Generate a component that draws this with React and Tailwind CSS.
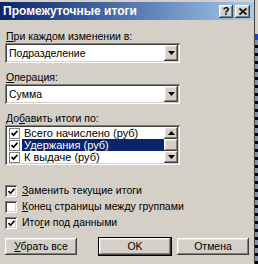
import React from "react";

const RAISED =
  "shadow-[inset_-1px_-1px_0_#404040,inset_1px_1px_0_#ffffff,inset_-2px_-2px_0_#808080,inset_2px_2px_0_#e4e2dc]";
const SUNKEN =
  "shadow-[inset_1px_1px_0_#808080,inset_-1px_-1px_0_#ffffff,inset_2px_2px_0_#404040,inset_-2px_-2px_0_#d4d0c8]";

function Check({ size = 7 }) {
  return (
    <svg width={size} height={size} viewBox="0 0 7 7" className="block">
      <path d="M0.5 3 L2.5 5.3 L6.5 0.8" fill="none" stroke="#000" strokeWidth="1.7" />
    </svg>
  );
}

function Arrow({ up }) {
  return (
    <svg width="7" height="4" viewBox="0 0 7 4" className="block">
      {up ? <path d="M0 4 L3.5 0 L7 4 Z" fill="#000" /> : <path d="M0 0 L7 0 L3.5 4 Z" fill="#000" />}
    </svg>
  );
}

function Combo({ value }) {
  return (
    <div className={`ml-[5px] w-[175px] h-[20px] bg-white flex items-center pl-[4px] pr-[2px] ${SUNKEN}`}>
      <span className="flex-1 leading-none">{value}</span>
      <div className={`w-[14px] h-[16px] bg-[#d4d0c8] flex items-center justify-center ${RAISED}`}>
        <Arrow />
      </div>
    </div>
  );
}

function CheckBox({ checked }) {
  return (
    <div className={`w-[12px] h-[12px] bg-white flex items-center justify-center shrink-0 ${SUNKEN}`}>
      {checked && <Check />}
    </div>
  );
}

function Button({ children, def }) {
  return (
    <div
      className={`h-[17px] w-[72px] flex items-center justify-center bg-[#d4d0c8] ${
        def ? "outline outline-1 outline-black" : ""
      } ${RAISED}`}
    >
      {children}
    </div>
  );
}

export default function App() {
  return (
    <div
      className="w-[258px] h-[264px] flex bg-[#d4d0c8] text-[10.5px] text-black overflow-hidden"
      style={{ fontFamily: '"Liberation Sans", Arial, sans-serif' }}
    >
      <div className="w-[255px] h-full border-r border-[#404040] flex flex-col pt-[2px]">
        {/* title bar */}
        <div className="h-[18px] bg-linear-to-r from-[#0a246a] to-[#a6caf0] flex items-center pl-[3px] pr-[4px]">
          <span className="flex-1 text-white font-bold text-[12px] leading-none">Промежуточные итоги</span>
          <div className={`w-[14px] h-[13px] bg-[#d4d0c8] flex items-center justify-center font-bold text-[11px] leading-none ${RAISED}`}>?</div>
          <div className={`ml-[2px] w-[15px] h-[13px] bg-[#d4d0c8] flex items-center justify-center ${RAISED}`}>
            <svg width="8" height="7" viewBox="0 0 8 7" className="block">
              <path d="M0.5 0.5 L7.5 6.5 M7.5 0.5 L0.5 6.5" stroke="#000" strokeWidth="1.6" />
            </svg>
          </div>
        </div>

        <div className="mt-[10px] ml-[6px] h-[13px] leading-[13px]">
          <span className="underline">П</span>ри каждом изменении в:
        </div>
        <div>
          <Combo value="Подразделение" />
        </div>

        <div className="mt-[8px] ml-[6px] h-[13px] leading-[13px]">
          <span className="underline">О</span>перация:
        </div>
        <div>
          <Combo value="Сумма" />
        </div>

        <div className="mt-[8px] ml-[6px] h-[13px] leading-[13px]">
          До<span className="underline">б</span>авить итоги по:
        </div>
        <div className={`ml-[5px] w-[175px] h-[40px] bg-white flex p-[2px] ${SUNKEN}`}>
          <div className="flex-1 flex flex-col">
            {[
              ["Всего начислено (руб)", false],
              ["Удержания (руб)", true],
              ["К выдаче (руб)", false],
            ].map(([t, sel]) => (
              <div key={t} className="h-[12px] flex items-center pl-[2px]">
                <div className="w-[11px] h-[11px] bg-white border border-[#808080] flex items-center justify-center shrink-0">
                  <Check size={7} />
                </div>
                <span className={`ml-[2px] pl-[2px] pr-[2px] h-[12px] leading-[12px] flex-1 text-[11px] ${sel ? "bg-[#0a246a] text-white" : ""}`}>
                  {t}
                </span>
              </div>
            ))}
          </div>
          <div className="w-[14px] flex flex-col bg-[#e8e6e0]">
            <div className={`h-[12px] bg-[#d4d0c8] flex items-center justify-center ${RAISED}`}>
              <Arrow up />
            </div>
            <div className={`h-[12px] bg-[#d4d0c8] ${RAISED}`} />
            <div className={`h-[12px] bg-[#d4d0c8] flex items-center justify-center ${RAISED}`}>
              <Arrow />
            </div>
          </div>
        </div>

        <div className="mt-[20px] flex flex-col gap-[4px] pl-[5px]">
          <div className="h-[12px] flex items-center">
            <CheckBox checked />
            <span className="ml-[5px]">
              <span className="underline">З</span>аменить текущие итоги
            </span>
          </div>
          <div className="h-[12px] flex items-center">
            <CheckBox />
            <span className="ml-[5px]">
              <span className="underline">К</span>онец страницы между группами
            </span>
          </div>
          <div className="h-[12px] flex items-center">
            <CheckBox checked />
            <span className="ml-[5px]">
              Ито<span className="underline">г</span>и под данными
            </span>
          </div>
        </div>

        <div className="mt-[9px] flex pl-[5px]">
          <Button>
            <span>
              <span className="underline">У</span>брать все
            </span>
          </Button>
          <div className="ml-[22px]">
            <Button def>OK</Button>
          </div>
          <div className="ml-[6px]">
            <Button>Отмена</Button>
          </div>
        </div>
      </div>
      <div className="w-[3px] h-full flex flex-col bg-[#c8ccd8]">
        <div className="h-[34px] bg-[#d4d0c8]" />
        <div className="h-[6px] bg-[#2040c0]" />
        <div className="flex-1 bg-[repeating-linear-gradient(to_bottom,#8890a8_0px,#8890a8_5px,#000_5px,#000_8px)]" />
      </div>
    </div>
  );
}
